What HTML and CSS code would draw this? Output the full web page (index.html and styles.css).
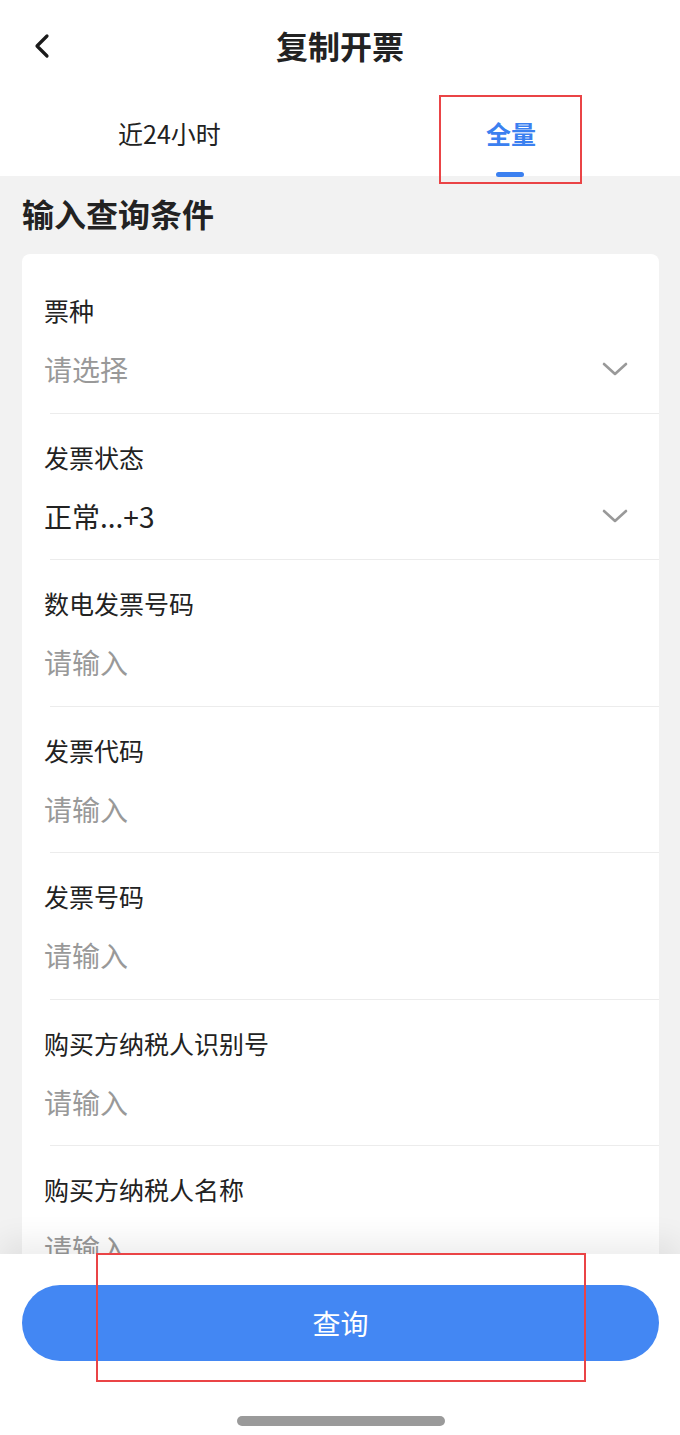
FILE: index.html
```html
<!DOCTYPE html>
<html lang="zh-CN">
<head>
  <meta charset="UTF-8">
  <meta name="viewport" content="width=device-width, initial-scale=1.0">
  <title>复制开票</title>
  <link rel="stylesheet" href="styles.css">
</head>
<body>
  <div class="page">
    <header class="top-bar">
      <span class="back">
        <svg width="18" height="26" viewBox="0 0 18 26"><path d="M14 3 L4 13 L14 23" fill="none" stroke="#1a1a1a" stroke-width="3.2" stroke-linecap="round" stroke-linejoin="round"/></svg>
      </span>
      <h1 class="title">复制开票</h1>
    </header>

    <nav class="tabs">
      <div class="tab">近24小时</div>
      <div class="tab active">全量<span class="tab-line"></span></div>
    </nav>

    <main class="content">
      <h2 class="section-title">输入查询条件</h2>
      <div class="card">
        <div class="field">
          <div class="field-label">票种</div>
          <div class="field-value placeholder">请选择<span class="arrow"><svg width="26" height="14" viewBox="0 0 26 14"><path d="M2 2 L13 12 L24 2" fill="none" stroke="#999" stroke-width="2.6" stroke-linecap="round" stroke-linejoin="round"/></svg></span></div>
        </div>
        <div class="field">
          <div class="field-label">发票状态</div>
          <div class="field-value">正常...+3<span class="arrow"><svg width="26" height="14" viewBox="0 0 26 14"><path d="M2 2 L13 12 L24 2" fill="none" stroke="#999" stroke-width="2.6" stroke-linecap="round" stroke-linejoin="round"/></svg></span></div>
        </div>
        <div class="field">
          <div class="field-label">数电发票号码</div>
          <div class="field-value placeholder">请输入</div>
        </div>
        <div class="field">
          <div class="field-label">发票代码</div>
          <div class="field-value placeholder">请输入</div>
        </div>
        <div class="field">
          <div class="field-label">发票号码</div>
          <div class="field-value placeholder">请输入</div>
        </div>
        <div class="field">
          <div class="field-label">购买方纳税人识别号</div>
          <div class="field-value placeholder">请输入</div>
        </div>
        <div class="field">
          <div class="field-label">购买方纳税人名称</div>
          <div class="field-value placeholder">请输入</div>
        </div>
      </div>
    </main>

    <footer class="bottom-bar">
      <button class="query-btn">查询</button>
      <div class="home-indicator"></div>
    </footer>

    <div class="mark mark-tab"></div>
    <div class="mark mark-btn"></div>
  </div>
</body>
</html>
```

FILE: styles.css
```css
body {
  margin: 0;
  font-family: "Noto Sans CJK SC", "Noto Sans", sans-serif;
  background-color: #f2f2f2;
  color: #222;
}

.page {
  position: relative;
  width: 680px;
  height: 1435px;
  display: flex;
  flex-direction: column;
  overflow: hidden;
}

.top-bar {
  height: 90px;
  background-color: #fff;
  display: flex;
  align-items: center;
  justify-content: center;
  position: relative;
}

.back {
  position: absolute;
  left: 33px;
  top: 33px;
  display: flex;
}

.title {
  margin: 0;
  font-size: 32px;
  font-weight: 700;
  line-height: 40px;
  margin-top: -1px;
}

.tabs {
  height: 86px;
  background-color: #fff;
  display: flex;
}

.tab {
  position: relative;
  width: 340px;
  box-sizing: border-box;
  padding-top: 26px;
  font-size: 25px;
  line-height: 34px;
  color: #222;
}

.tab:first-child {
  padding-left: 118px;
}

.tab.active {
  padding-left: 146px;
  color: #3b80f0;
  font-weight: 700;
}

.tab-line {
  position: absolute;
  left: 156px;
  top: 82px;
  width: 28px;
  height: 5px;
  border-radius: 3px;
  background-color: #3b80f0;
}

.content {
  flex: 1;
  overflow: hidden;
  padding: 0 21px 0 22px;
}

.section-title {
  margin: 0;
  padding-top: 17px;
  font-size: 32px;
  font-weight: 700;
  line-height: 40px;
  height: 61px;
}

.card {
  background-color: #fff;
  border-radius: 8px;
  padding: 13px 0 0 22px;
}

.field {
  padding: 29px 0 27.5px;
  background: linear-gradient(#ececec, #ececec) no-repeat 6px 100% / calc(100% - 6px) 1px;
}

.field-label {
  font-size: 25px;
  line-height: 28px;
  color: #222;
}

.field-value {
  margin-top: 28px;
  font-size: 28px;
  line-height: 34px;
  color: #222;
  display: flex;
  align-items: center;
  justify-content: space-between;
  padding-right: 31px;
}

.field-value.placeholder {
  color: #999;
}

.arrow {
  display: flex;
}

.bottom-bar {
  height: 181px;
  flex-shrink: 0;
  background-color: #fff;
  box-shadow: 0 -14px 28px rgba(0, 0, 0, 0.07);
  position: relative;
  padding: 31px 21px 0 22px;
  box-sizing: border-box;
}

.query-btn {
  width: 100%;
  height: 76px;
  border: none;
  border-radius: 38px;
  background-color: #4387f3;
  color: #fff;
  font-family: inherit;
  font-size: 28px;
}

.home-indicator {
  width: 208px;
  height: 10px;
  border-radius: 5px;
  background-color: #9a9a9a;
  margin: 55px auto 0;
}

.mark {
  position: absolute;
  border: 2px solid #ea4446;
  box-sizing: border-box;
}

.mark-tab {
  left: 439px;
  top: 95px;
  width: 143px;
  height: 89px;
}

.mark-btn {
  left: 96px;
  top: 1253px;
  width: 490px;
  height: 129px;
}
```
